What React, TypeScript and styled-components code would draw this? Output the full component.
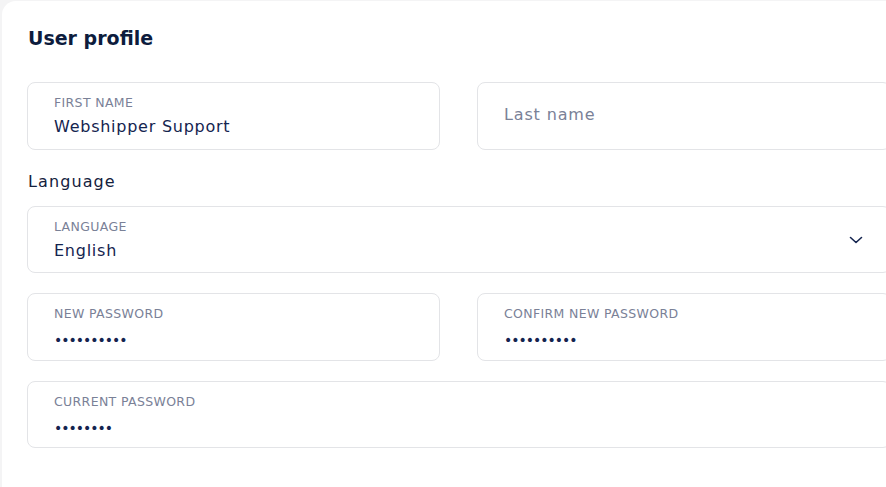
import React from "react";
import styled, { createGlobalStyle } from "styled-components";

const Global = createGlobalStyle`
  html, body { margin: 0; padding: 0; background: #f4f4f5; }
  body { font-family: "DejaVu Sans", "Open Sans", sans-serif; overflow: hidden; }
  * { box-sizing: border-box; }
`;

const Page = styled.div`
  padding: 1px 0 0 2px;
  width: 960px;
`;

const Card = styled.section`
  width: 913px;
  height: 500px;
  background: #ffffff;
  border-radius: 14px;
  padding: 23px 25px 0 25px;
`;

const Title = styled.h2`
  margin: 0 0 0 1px;
  font-size: 19px;
  line-height: 28px;
  font-weight: 700;
  color: #0d1c3d;
`;

const Grid = styled.div<{ mt: number }>`
  display: grid;
  grid-template-columns: 413px 414px;
  column-gap: 37px;
  margin-top: ${(p) => p.mt}px;
`;

const Field = styled.div<{ span?: boolean; h?: number }>`
  grid-column: ${(p) => (p.span ? "1 / -1" : "auto")};
  height: ${(p) => p.h ?? 68}px;
  border: 1px solid #e3e4e7;
  border-radius: 8px;
  padding: 12px 26px 0 26px;
  display: flex;
  flex-direction: column;
  position: relative;
`;

const Label = styled.span`
  font-size: 12.5px;
  line-height: 16px;
  letter-spacing: 0.35px;
  color: #7a8197;
  text-transform: uppercase;
`;

const Value = styled.span`
  font-size: 16px;
  line-height: 22px;
  letter-spacing: 0.75px;
  margin-top: 5px;
  color: #14244f;
`;

const Dots = styled.span`
  font-size: 14px;
  line-height: 20px;
  margin-top: 8px;
  letter-spacing: -1px;
  color: #14244f;
`;

const Placeholder = styled.span`
  font-size: 16px;
  line-height: 22px;
  letter-spacing: 0.85px;
  margin-top: 9px;
  color: #7a8197;
`;

const SectionLabel = styled.div`
  margin: 21px 0 0 1px;
  font-size: 16px;
  line-height: 22px;
  letter-spacing: 1.1px;
  color: #14213d;
`;

const Chevron = styled.svg`
  position: absolute;
  right: 27px;
  top: 29px;
`;

export default function App() {
  return (
    <>
      <Global />
      <Page>
        <Card>
          <Title>User profile</Title>
          <Grid mt={30}>
            <Field>
              <Label>First name</Label>
              <Value>Webshipper Support</Value>
            </Field>
            <Field>
              <Placeholder>Last name</Placeholder>
            </Field>
          </Grid>
          <SectionLabel>Language</SectionLabel>
          <Grid mt={13}>
            <Field span h={67}>
              <Label>Language</Label>
              <Value>English</Value>
              <Chevron width="14" height="8" viewBox="0 0 14 8">
                <path d="M1.5 1.5 L7 6.5 L12.5 1.5" fill="none" stroke="#14244f" strokeWidth="1.6" strokeLinecap="round" strokeLinejoin="round" />
              </Chevron>
            </Field>
          </Grid>
          <Grid mt={20}>
            <Field>
              <Label>New password</Label>
              <Dots>••••••••••</Dots>
            </Field>
            <Field>
              <Label>Confirm new password</Label>
              <Dots>••••••••••</Dots>
            </Field>
          </Grid>
          <Grid mt={20}>
            <Field span h={67}>
              <Label>Current password</Label>
              <Dots>••••••••</Dots>
            </Field>
          </Grid>
        </Card>
      </Page>
    </>
  );
}
